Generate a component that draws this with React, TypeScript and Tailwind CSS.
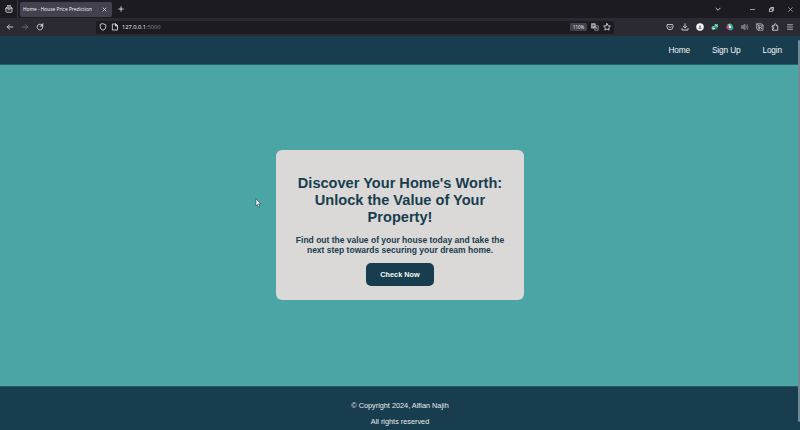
import type { ReactNode } from "react";

type IconProps = { children: ReactNode; className?: string };

function Icon({ children, className = "text-[#d6d5dc]" }: IconProps) {
  return (
    <svg
      viewBox="0 0 16 16"
      className={`size-2 shrink-0 ${className}`}
      fill="none"
      stroke="currentColor"
      strokeWidth="1.8"
      strokeLinecap="round"
      strokeLinejoin="round"
    >
      {children}
    </svg>
  );
}

function TabBar() {
  return (
    <div className="flex h-[18px] items-center bg-[#1c1b22]">
      <div className="flex h-full w-[18px] items-center justify-center border-r border-[#38373f] pl-px">
        <Icon>
          <path d="M4.500 1.500h7M2 6.500L4 4h8l2 2.500V13a1.500 1.500 0 0 1-1.500 1.500h-9A1.500 1.500 0 0 1 2 13zM2 6.500h12M6 9.500h4" />
        </Icon>
      </div>
      <div className="ml-[2px] flex h-[15px] w-[92px] items-center justify-between rounded-[2px] bg-[#42414d] pr-[5px] pl-[3px]">
        <span className="pt-px font-['Open_Sans',sans-serif] text-[4.85px] leading-[7px] font-medium whitespace-nowrap text-[#f4f4f8]">
          Home - House Price Prediction
        </span>
        <svg viewBox="0 0 8 8" className="size-[5px]" stroke="#d6d5dc" strokeWidth="1.2">
          <path d="M1 1l6 6M7 1L1 7" />
        </svg>
      </div>
      <svg viewBox="0 0 8 8" className="ml-[6px] size-[6px]" stroke="#dddce3" strokeWidth="1.2">
        <path d="M4 .5v7M.5 4h7" />
      </svg>
      <div className="ml-auto flex items-center pr-[7px]">
        <svg viewBox="0 0 8 8" className="mr-[29px] size-[6px]" fill="none" stroke="#dddce3" strokeWidth="1.2">
          <path d="M.8 2.500L4 5.700l3.200-3.200" />
        </svg>
        <svg viewBox="0 0 8 8" className="mr-[14px] size-[5px]" stroke="#c8c7ce" strokeWidth="1.2">
          <path d="M0 4h8" />
        </svg>
        <svg viewBox="0 0 8 8" className="mr-[14px] size-[5px]" fill="none" stroke="#e0dfe6" strokeWidth="1.3">
          <path d="M.8 2.800h4.600v4.600H.8zM2.800 2.500V.8h4.600v4.600H5.800" />
        </svg>
        <svg viewBox="0 0 8 8" className="size-[5px]" stroke="#c8c7ce" strokeWidth="1">
          <path d="M.5.5l7 7M7.500.5l-7 7" />
        </svg>
      </div>
    </div>
  );
}

function Toolbar() {
  return (
    <div className="flex h-[18px] items-center bg-[#2b2a33]">
      <div className="flex w-[96px] items-center gap-[7px] pl-[6px]">
        <Icon>
          <path d="M13.500 8h-11M7 3.500L2.500 8 7 12.500" />
        </Icon>
        <Icon className="text-[#73727b]">
          <path d="M2.500 8h11M9 3.500l4.500 4.500L9 12.500" />
        </Icon>
        <Icon>
          <path d="M11 3.200A5.700 5.700 0 1 0 13.700 8" />
          <path d="M14 1.500V6.500H9z" fill="currentColor" strokeWidth="1" />
        </Icon>
      </div>
      <div className="flex h-[13px] w-[518px] items-center rounded-[2px] bg-[#1c1b22] pr-[3px] pl-[3px]">
        <Icon>
          <path d="M8 1.500l5.500 2v4c0 4-2.500 5.800-5.500 7-3-1.200-5.500-3-5.500-7v-4z" />
        </Icon>
        <Icon className="ml-1 text-[#d6d5dc]">
          <path d="M3.500 2h5.500l4 4v8H3.500z" />
          <path d="M9 2v4h4z" fill="currentColor" />
        </Icon>
        <span className="ml-[3px] pt-px font-['Open_Sans',sans-serif] text-[5.700px] leading-[7px] text-[#8d8c95]">
          <span className="text-[#f4f4f8]">127.0.0.1</span>:5000
        </span>
        <span className="ml-auto flex h-[8px] w-[17px] items-center justify-center rounded-[1px] bg-[#42414d] font-['Open_Sans',sans-serif] text-[4.4px] text-[#f4f4f8]">
          110%
        </span>
        <Icon className="ml-1 text-[#b5b4bc]">
          <path d="M1.500 1.500h7v8.500h-7z" fill="currentColor" />
          <path d="M10 5.500h4.500v9H7.500v-2" strokeWidth="1.300" />
          <path d="M9.500 12l1.500-4 1.500 4" strokeWidth="1.200" />
          <path d="M3 4.500h4M5 4.500c0 2-1 3-2 3.500" stroke="#1c1b22" strokeWidth="1" />
        </Icon>
        <Icon className="ml-1 text-[#d6d5dc]">
          <path d="M8 1.200l2.100 4.300 4.700.7-3.400 3.300.8 4.700L8 12l-4.200 2.200.8-4.700L1.200 6.200l4.700-.7z" />
        </Icon>
      </div>
      <div className="ml-auto flex items-center gap-[7px] pr-[6px]">
        <Icon className="text-[#c9c8cf]">
          <path d="M3 3h10a1 1 0 0 1 1 1v3.500a6 5.800 0 0 1-12 0V4a1 1 0 0 1 1-1zM5.500 7L8 9.500 10.500 7" />
        </Icon>
        <Icon>
          <path d="M8 1.500v8M4.500 6.500L8 10l3.500-3.500M2 11v3h12v-3" />
        </Icon>
        <svg viewBox="0 0 16 16" className="size-2">
          <circle cx="8" cy="8" r="7.500" fill="#fafafa" />
          <path d="M8 3.500l2 5H6zM5 9.500h6v2H5z" fill="#54535b" />
        </svg>
        <svg viewBox="0 0 16 16" className="size-2">
          <path d="M7 2h7v7H7z" fill="#43b89b" />
          <circle cx="5" cy="10" r="4" fill="#77c9ba" />
          <path d="M5 9h8v4H5z" fill="#267568" />
          <path d="M9 4l4 3M4 11h4" stroke="#e8f4f0" strokeWidth="1.600" />
        </svg>
        <svg viewBox="0 0 16 16" className="size-2">
          <path d="M8 8L2 4a7 7 0 0 1 6-3z" fill="#66c8ce" />
          <path d="M8 8V1a7 7 0 0 1 6 5z" fill="#41bb68" />
          <path d="M8 8l6-2a7 7 0 0 1-4 9z" fill="#35a982" />
          <path d="M8 8l2 7a7 7 0 0 1-6-2z" fill="#5487d8" />
          <path d="M8 8l-4 5a7 7 0 0 1-2-9z" fill="#d74a69" />
          <circle cx="8" cy="8" r="2.500" fill="#edf1f2" />
        </svg>
        <Icon className="text-[#7c7b84]">
          <path d="M1 5.500h3L8 2v12l-4-3.500H1z" fill="currentColor" />
          <path d="M10.500 5.500q2 2.500 0 5M12.500 3q4 5 0 10" />
        </Icon>
        <Icon className="text-[#aaa9b0]">
          <path d="M2 1.500h9l3 3v10H4l-2-2zM2 1.500l2.500 3H14M4.500 4.500v10M7 12V7l4.500 5V7" />
        </Icon>
        <Icon>
          <path d="M3 5.500h3.500V3.500a2 2 0 0 1 4 0v2h3v9H3V11h1.500a1.400 1.400 0 0 0 0-2.800H3z" />
        </Icon>
        <Icon className="text-[#b9b8bf]">
          <path d="M3 3.500h10M3 8h10M3 12.500h10" />
        </Icon>
      </div>
    </div>
  );
}

export default function App() {
  return (
    <div className="relative flex h-[430px] w-[800px] flex-col overflow-hidden bg-[#4aa5a4] font-['Liberation_Sans',Arial,sans-serif]">
      <TabBar />
      <Toolbar />
      <header className="flex h-[29px] items-center justify-end gap-[22px] border-b border-[#285f6c] bg-[#183d4e] pr-[18px] text-[8.300px] tracking-[-0.15px] text-[#f1f5f6]">
        <a>Home</a>
        <a>Sign Up</a>
        <a>Login</a>
      </header>
      <main className="flex h-[321px] items-center justify-center pb-px">
        <section className="flex h-[150px] w-[248px] flex-col items-center rounded-[6px] bg-[#dad9d7] pt-[25px] text-center font-bold text-[#183d4e]">
          <h1 className="text-[14.58px] leading-[17px] whitespace-nowrap">
            Discover Your Home's Worth:
            <br />
            Unlock the Value of Your
            <br />
            Property!
          </h1>
          <p className="mt-[9px] text-[8.5px] leading-[10px] whitespace-nowrap">
            Find out the value of your house today and take the
            <br />
            next step towards securing your dream home.
          </p>
          <button className="mt-2 h-[23px] w-[68px] rounded-[5px] bg-[#183d4e] pt-px text-[7.3px] font-bold text-[#f6f8f8]">
            Check Now
          </button>
        </section>
      </main>
      <footer className="flex h-[44px] flex-col items-center gap-[6px] border-t border-[#235866] bg-[#183d4e] pt-[14px] text-[7.3px] leading-[10px] text-[#e9eef0]">
        <p>© Copyright 2024, Alfian Najih</p>
        <p>All rights reserved</p>
      </footer>
      <div className="absolute top-[40px] right-0 h-[382px] w-[2px] rounded-full bg-[#718b95]" />
      <svg viewBox="0 0 10 16" className="absolute top-[198px] left-[255px] h-[10px] w-[6px]">
        <path d="M1.500 1v12l2.500-2.500 2 4.500 2-1-2-4.500h3.500z" fill="#f4f4f4" stroke="#28464d" strokeWidth="1" />
      </svg>
    </div>
  );
}
